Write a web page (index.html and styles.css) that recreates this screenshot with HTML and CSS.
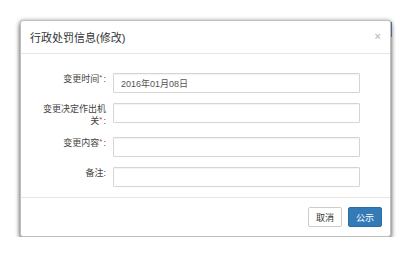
FILE: index.html
```html
<!DOCTYPE html>
<html lang="zh-CN">
<head>
    <meta charset="UTF-8">
    <title>行政处罚信息(修改)</title>
    <link rel="stylesheet" href="styles.css">
</head>
<body>
    <div class="modal">
        <div class="modal-header">
            <h4 class="modal-title">行政处罚信息(修改)</h4>
            <span class="close">&times;</span>
        </div>
        <div class="modal-body">
            <div class="form-row">
                <label class="control-label">变更时间<span class="req">*</span>:</label>
                <input class="form-control" type="text" value="2016年01月08日">
            </div>
            <div class="form-row">
                <label class="control-label">变更决定作出机关<span class="req">*</span>:</label>
                <input class="form-control" type="text">
            </div>
            <div class="form-row">
                <label class="control-label">变更内容<span class="req">*</span>:</label>
                <input class="form-control" type="text">
            </div>
            <div class="form-row">
                <label class="control-label">备注:</label>
                <input class="form-control" type="text">
            </div>
        </div>
        <div class="modal-footer">
            <button class="btn">取消</button>
            <button class="btn btn-primary">公示</button>
        </div>
    </div>
</body>
</html>
```

FILE: styles.css
```css
body {
    margin: 0;
    padding: 20px 0 0 20px;
    background: #fff;
    font-family: "Liberation Sans", "Noto Sans CJK SC", sans-serif;
    color: #333;
}
.modal {
    position: relative;
    width: 369px;
    background: #fff;
    border: 1px solid rgba(0,0,0,.25);
    border-radius: 3px;
    box-shadow: 0 3px 5px rgba(0,0,0,.6), 0 0 4px rgba(0,0,0,.25);
}
.modal::after {
    content: "";
    position: absolute;
    right: -2px;
    top: 1px;
    width: 1px;
    height: 15px;
    background: #4a6a8f;
}
.modal-header {
    height: 32px;
    display: flex;
    align-items: center;
    justify-content: space-between;
    padding: 0 9px 0 9px;
    border-bottom: 1px solid #e5e5e5;
}
.modal-title {
    margin: 0;
    font-size: 11px;
    font-weight: normal;
    color: #333;
}
.close {
    color: #c4c4c4;
    font-size: 11px;
    font-weight: bold;
    margin-top: -2px;
}
.modal-body {
    padding: 19px 30px 10px 22px;
}
.form-row {
    display: flex;
    align-items: flex-start;
    margin-bottom: 10px;
}
.form-row:last-child {
    margin-bottom: 0;
}
.control-label {
    width: 63px;
    text-align: right;
    font-size: 9px;
    line-height: 12px;
    color: #444;
    margin-right: 7px;
}
.req {
    color: #e0302a;
    font-size: 8px;
    vertical-align: 2px;
    line-height: 0;
    margin-right: 1px;
}
.form-control {
    flex: 1;
    height: 20px;
    box-sizing: border-box;
    padding: 0 7px;
    border: 1px solid #d5d5d5;
    border-radius: 1px;
    box-shadow: inset 0 1px 1px rgba(0,0,0,.05);
    font-family: "Liberation Sans", "Noto Sans CJK SC", sans-serif;
    font-size: 9px;
    color: #555;
    outline: none;
}
.modal-footer {
    display: flex;
    justify-content: flex-end;
    gap: 6px;
    padding: 9px 8px 9px;
    border-top: 1px solid #e5e5e5;
}
.btn {
    width: 34px;
    height: 20px;
    padding: 0;
    border: 1px solid #ccc;
    border-radius: 2px;
    background: #fff;
    color: #333;
    font-family: "Liberation Sans", "Noto Sans CJK SC", sans-serif;
    font-size: 9px;
}
.btn-primary {
    background: #337ab7;
    border-color: #2e6da4;
    color: #fff;
}
```
